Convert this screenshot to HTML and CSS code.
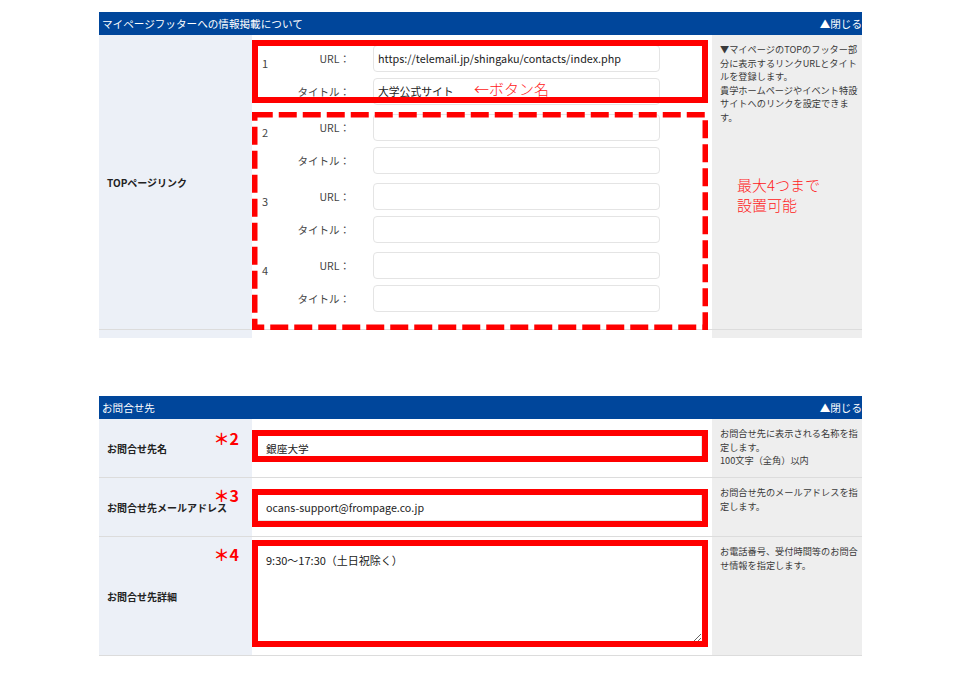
FILE: index.html
```html
<!DOCTYPE html>
<html lang="ja">
<head>
<meta charset="utf-8">
<title>設定</title>
<link rel="stylesheet" href="styles.css">
</head>
<body>
<div class="page">
  <section class="panel">
    <div class="panel-head"><span>マイページフッターへの情報掲載について</span><span class="toggle">▲閉じる</span></div>
    <div class="row">
      <div class="cell-label">TOPページリンク</div>
      <div class="cell-input links">
        <div class="link-group">
          <div class="num">1</div>
          <div class="flabel">URL：</div>
          <input class="text" type="text" value="https://telemail.jp/shingaku/contacts/index.php">
          <div class="flabel">タイトル：</div>
          <input class="text" type="text" value="大学公式サイト">
        </div>
        <div class="link-group">
          <div class="num">2</div>
          <div class="flabel">URL：</div>
          <input class="text" type="text" value="">
          <div class="flabel">タイトル：</div>
          <input class="text" type="text" value="">
        </div>
        <div class="link-group">
          <div class="num">3</div>
          <div class="flabel">URL：</div>
          <input class="text" type="text" value="">
          <div class="flabel">タイトル：</div>
          <input class="text" type="text" value="">
        </div>
        <div class="link-group">
          <div class="num">4</div>
          <div class="flabel">URL：</div>
          <input class="text" type="text" value="">
          <div class="flabel">タイトル：</div>
          <input class="text" type="text" value="">
        </div>
        <div class="mark mark-top"></div>
        <svg class="mark-dash" width="456" height="218" viewBox="0 0 456 218">
          <rect x="2.75" y="2.75" width="450.5" height="212.5" fill="none" stroke="#ff0000" stroke-width="5.5" stroke-dasharray="18 6"/>
        </svg>
        <div class="note note-button">←ボタン名</div>
      </div>
      <div class="cell-help">
        <span class="ln">▼マイページのTOPのフッター部</span>
        <span class="ln">分に表示するリンクURLとタイト</span>
        <span class="ln">ルを登録します。</span>
        <span class="ln">貴学ホームページやイベント特設</span>
        <span class="ln">サイトへのリンクを設定できま</span>
        <span class="ln">す。</span>
        <div class="note note-max">最大4つまで<br>設置可能</div>
      </div>
    </div>
    <div class="row row-stub">
      <div class="cell-label"></div>
      <div class="cell-input"></div>
      <div class="cell-help"></div>
    </div>
  </section>

  <section class="panel panel-contact">
    <div class="panel-head"><span>お問合せ先</span><span class="toggle">▲閉じる</span></div>
    <div class="row contact-row">
      <div class="cell-label"><span class="lbl">お問合せ先名</span><span class="req req-1">＊2</span></div>
      <div class="cell-input">
        <input class="text wide" type="text" value="銀座大学">
        <div class="mark mark-c1"></div>
      </div>
      <div class="cell-help">
        <span class="ln">お問合せ先に表示される名称を指</span>
        <span class="ln">定します。</span>
        <span class="ln">100文字（全角）以内</span>
      </div>
    </div>
    <div class="row contact-row">
      <div class="cell-label"><span class="lbl">お問合せ先メールアドレス</span><span class="req req-2">＊3</span></div>
      <div class="cell-input">
        <input class="text wide" type="text" value="ocans-support@frompage.co.jp">
        <div class="mark mark-c2"></div>
      </div>
      <div class="cell-help">
        <span class="ln">お問合せ先のメールアドレスを指</span>
        <span class="ln">定します。</span>
      </div>
    </div>
    <div class="row contact-row detail-row">
      <div class="cell-label"><span class="lbl">お問合せ先詳細</span><span class="req req-3">＊4</span></div>
      <div class="cell-input">
        <textarea class="area">9:30～17:30（土日祝除く）</textarea>
        <div class="mark mark-c3"></div>
      </div>
      <div class="cell-help">
        <span class="ln">お電話番号、受付時間等のお問合</span>
        <span class="ln">せ情報を指定します。</span>
      </div>
    </div>
  </section>
</div>
</body>
</html>
```

FILE: styles.css
```css
* {
  box-sizing: border-box;
}

body {
  margin: 0;
  background: #ffffff;
  color: #333333;
  font-family: "Noto Sans CJK JP", "Noto Sans", sans-serif;
}

.page {
  width: 763px;
  margin-left: 99px;
  padding-top: 12px;
}

.panel-head {
  height: 23px;
  background: #00469b;
  color: #ffffff;
  font-size: 10.6px;
  display: flex;
  justify-content: space-between;
  align-items: center;
  padding-left: 3px;
}

.row {
  display: grid;
  grid-template-columns: 153px 460px 150px;
  border-bottom: 1px solid #dcdcdc;
}

.cell-label {
  position: relative;
  background: #ecf0f7;
  color: #222222;
  font-size: 10px;
  font-weight: bold;
  display: flex;
  align-items: center;
  padding-left: 8px;
}

.lbl {
  line-height: 10px;
  padding-top: 2px;
}

.cell-input {
  position: relative;
  background: #ffffff;
}

.cell-help {
  position: relative;
  background: #eeeeee;
  color: #3a3a3a;
  font-size: 9.2px;
  line-height: 13.5px;
  padding: 8px 0 0 8px;
}

.ln {
  display: block;
  white-space: nowrap;
}

/* links section */
.links {
  display: flex;
  flex-direction: column;
  gap: 9px;
  padding: 10px 0 17px 10px;
}

.link-group {
  display: grid;
  grid-template-columns: 20px 91px 287px;
  grid-template-rows: 27px 27px;
  row-gap: 6px;
}

.num {
  grid-row: 1 / span 2;
  font-size: 11px;
  line-height: 14px;
  padding-top: 11px;
  color: #444444;
}

.flabel {
  align-self: center;
  text-align: right;
  padding-right: 23px;
  font-size: 10.5px;
  color: #444444;
}

.text {
  display: block;
  height: 27px;
  width: 100%;
  border: 1px solid #e4e4e4;
  border-radius: 4px;
  padding: 0 4px 2px;
  font-family: "Noto Sans CJK JP", "Noto Sans", sans-serif;
  font-size: 10.8px;
  color: #222222;
  background: #ffffff;
  outline: none;
}

.row-stub {
  height: 6px;
  border-bottom: none;
}

/* contact section */
.panel-contact {
  margin-top: 60px;
}

.contact-row .cell-input {
  padding: 15px 10px 15px 5px;
}

.contact-row .text.wide {
  height: 28px;
  padding: 0 8px;
  font-size: 10.7px;
  border-radius: 2px;
}

.detail-row .cell-input {
  padding: 7px 9px 12px 5px;
}

.area {
  display: block;
  width: 100%;
  height: 99px;
  border: 1px solid #cfcfcf;
  padding: 8px 8px;
  font-family: "Noto Sans CJK JP", "Noto Sans", sans-serif;
  font-size: 11px;
  line-height: 14px;
  color: #222222;
  resize: both;
  outline: none;
}

/* annotations */
.mark {
  position: absolute;
  left: 0;
  width: 456px;
  border: 6px solid #ff0000;
  z-index: 2;
}

.mark-top {
  top: 5px;
  height: 63px;
}

.mark-dash {
  position: absolute;
  left: 0;
  top: 77px;
  z-index: 2;
}

.mark-c1 {
  top: 11px;
  height: 32px;
}

.mark-c2 {
  top: 11px;
  height: 38px;
}

.mark-c3 {
  top: 3px;
  height: 107px;
}

.note {
  position: absolute;
  color: #ff2020;
  font-size: 15px;
  font-weight: 300;
  line-height: 20px;
  white-space: nowrap;
  z-index: 3;
}

.note-button {
  left: 222px;
  top: 44px;
}

.note-max {
  left: 25px;
  top: 140px;
}

.req {
  position: absolute;
  right: 13px;
  color: #ff0000;
  font-size: 16px;
  line-height: 11px;
  font-weight: bold;
}

.req-1 {
  top: 14px;
}

.req-2 {
  top: 12px;
}

.req-3 {
  top: 12px;
}
```
